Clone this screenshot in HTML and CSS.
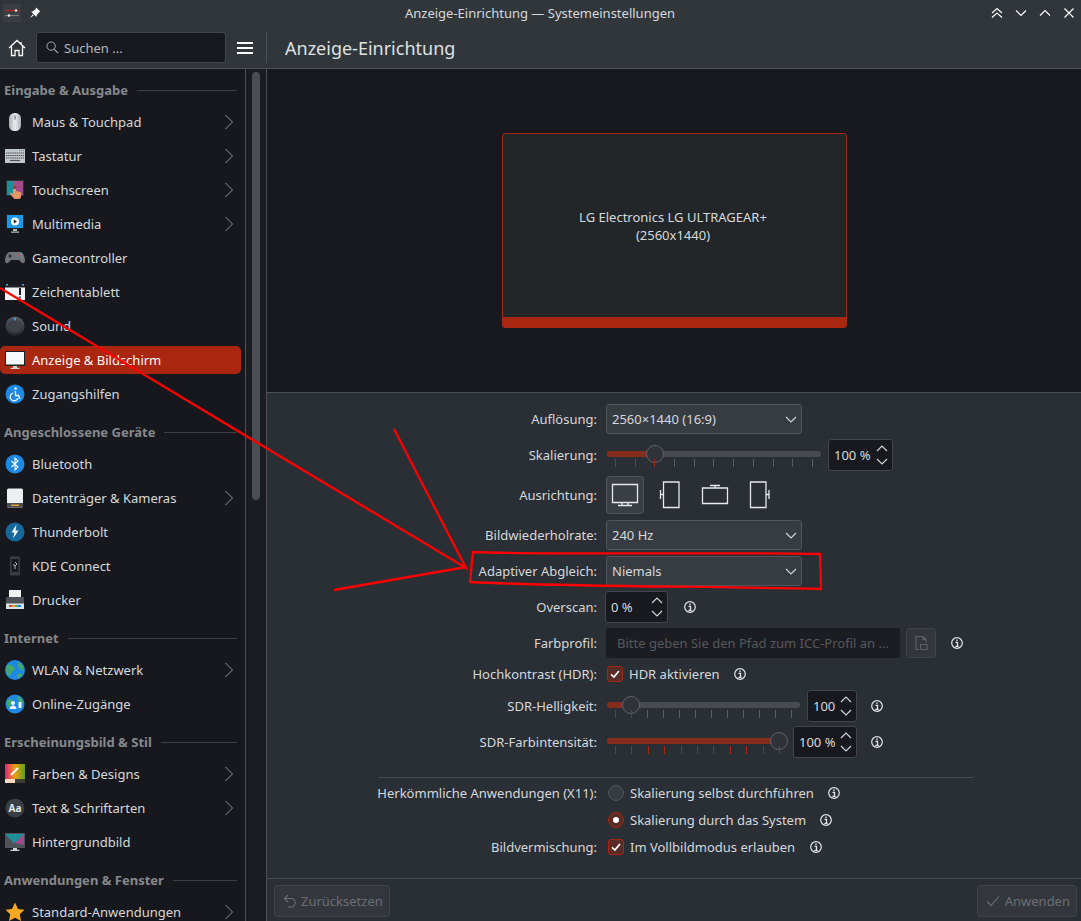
FILE: index.html
```html
<!DOCTYPE html>
<html lang="de">
<head>
    <meta charset="UTF-8">
    <title>Anzeige-Einrichtung — Systemeinstellungen</title>
    <link rel="stylesheet" href="styles.css">
</head>
<body>
    <svg class="defs" width="0" height="0">
        <symbol id="chev-right" viewBox="0 0 10 16"><path d="M1.5 1 L8.5 8 L1.5 15" fill="none" stroke="currentColor" stroke-width="1"/></symbol>
        <symbol id="chev-down" viewBox="0 0 12 7"><path d="M1 1 L6 6 L11 1" fill="none" stroke="currentColor" stroke-width="1.1"/></symbol>
        <symbol id="chev-up" viewBox="0 0 12 7"><path d="M1 6 L6 1 L11 6" fill="none" stroke="currentColor" stroke-width="1.1"/></symbol>
        <symbol id="info" viewBox="0 0 12 12"><circle cx="6" cy="6" r="5.3" fill="none" stroke="currentColor" stroke-width="1.2"/><path d="M6 2.5v1.6M4.5 5.3H6.5V9M4.4 9.3h3.2" fill="none" stroke="currentColor" stroke-width="1.3"/></symbol>
        <symbol id="tick" viewBox="0 0 16 16"><path d="M3.5 8.5 L6.8 11.5 L12.5 4.5" fill="none" stroke="currentColor" stroke-width="2"/></symbol>
    </svg>

    <div class="window">
        <div class="titlebar">
            <div class="title-left">
                <svg class="app-icon" width="18" height="18" viewBox="0 0 18 18"><rect width="18" height="18" rx="1" fill="#3a3d42"/><path d="M2 6.5h14" stroke="#c0291b" stroke-width="1.2"/><path d="M2 11.5h14" stroke="#777" stroke-width="1.2"/><circle cx="13" cy="6.5" r="1.3" fill="#eee"/><circle cx="6" cy="11.5" r="1.3" fill="#eee"/></svg>
                <svg width="12" height="12" viewBox="0 0 12 12"><path d="M7.2 0.6 L11.4 4.8 L9.8 5.4 L7.6 8.6 L7.4 10 L2 4.6 L3.4 4.4 L6.6 2.2Z M3.8 7.2 L0.8 11.2 L4.8 8.2Z" fill="#fcfcfc"/></svg>
            </div>
            <div class="title-text">Anzeige-Einrichtung — Systemeinstellungen</div>
            <div class="title-buttons">
                <svg width="12" height="12" viewBox="0 0 12 12"><path d="M1 6 L6 1.5 L11 6 M1 10.5 L6 6 L11 10.5" fill="none" stroke="#fcfcfc" stroke-width="1.2"/></svg>
                <svg width="12" height="12" viewBox="0 0 12 12"><path d="M1 3.5 L6 8.5 L11 3.5" fill="none" stroke="#fcfcfc" stroke-width="1.2"/></svg>
                <svg width="12" height="12" viewBox="0 0 12 12"><path d="M1 8.5 L6 3.5 L11 8.5" fill="none" stroke="#fcfcfc" stroke-width="1.2"/></svg>
                <svg width="12" height="12" viewBox="0 0 12 12"><path d="M1.5 1.5 L10.5 10.5 M10.5 1.5 L1.5 10.5" fill="none" stroke="#fcfcfc" stroke-width="1.2"/></svg>
            </div>
        </div>

        <div class="toolbar">
            <div class="toolbar-left">
                <svg class="home" width="18" height="18" viewBox="0 0 18 18"><path d="M1 9 L9 1.5 L17 9 M3.5 7.5 V16.5 H7 V11.5 H11 V16.5 H14.5 V7.5 M13 3 V5.5" fill="none" stroke="#fcfcfc" stroke-width="1.3"/></svg>
                <div class="search">
                    <svg width="13" height="13" viewBox="0 0 14 14"><circle cx="5.5" cy="5.5" r="4.5" fill="none" stroke="#b4b7ba" stroke-width="1"/><path d="M9 9 L13 13" stroke="#b4b7ba" stroke-width="1.1"/></svg>
                    <span>Suchen ...</span>
                </div>
                <svg class="burger" width="16" height="12" viewBox="0 0 16 12"><path d="M0 1h16M0 6h16M0 11h16" stroke="#fcfcfc" stroke-width="2"/></svg>
            </div>
            <div class="page-title">Anzeige-Einrichtung</div>
        </div>

        <div class="main">
            <div class="sidebar">
                <div class="group"><span>Eingabe &amp; Ausgabe</span><i></i></div>
                <div class="item">
                    <svg width="22" height="22" viewBox="0 0 22 22"><defs><linearGradient id="maus" x1="0" y1="0" x2="1" y2="0"><stop offset="0" stop-color="#a9adb3"/><stop offset=".5" stop-color="#eceef0"/><stop offset="1" stop-color="#a9adb3"/></linearGradient></defs><rect x="5" y="2" width="12" height="18" rx="5.500" fill="url(#maus)"/><rect x="10.300" y="4.500" width="1.400" height="4" fill="#7d8187"/></svg>
                    <span>Maus &amp; Touchpad</span><svg class="chev"><use href="#chev-right"/></svg>
                </div>
                <div class="item">
                    <svg width="22" height="22" viewBox="0 0 22 22"><rect x="1" y="4" width="20" height="14" fill="#c3c8ca"/><path d="M2 8h18M2 10.500h18M2 13h18" stroke="#4d5156" stroke-width="1.200" stroke-dasharray="1.500 .6"/><path d="M6 15.500h10" stroke="#4d5156" stroke-width="1.200"/><path d="M15 5.500h5" stroke="#2ea58a" stroke-width="1" stroke-dasharray="1 1"/></svg>
                    <span>Tastatur</span><svg class="chev"><use href="#chev-right"/></svg>
                </div>
                <div class="item">
                    <svg width="22" height="22" viewBox="0 0 22 22"><rect x="2" y="1" width="18" height="16" fill="#2b2f36"/><path d="M3 2h7v14H3z" fill="#1c8f9a"/><path d="M10 2h9v14H10z" fill="#a34a8a"/><path d="M9 7a1.500 1.500 0 0 1 3 0v5l4 1c1 .4 1.500 1 1.400 2l-.5 3c-.2 1-.9 2-2 2h-3.500c-1 0-1.800-.6-2.400-1.500L6 15c-.5-1 .8-1.800 1.600-1L9 15z" fill="#e59866"/><path d="M9 7a1.500 1.500 0 0 1 3 0v3H9z" fill="#b0392b"/></svg>
                    <span>Touchscreen</span><svg class="chev"><use href="#chev-right"/></svg>
                </div>
                <div class="item">
                    <svg width="22" height="22" viewBox="0 0 22 22"><rect x="2" y="1" width="18" height="15" fill="#1d2126"/><rect x="3" y="2" width="16" height="13" fill="#1a97e8"/><circle cx="11" cy="8.500" r="4" fill="#fcfcfc"/><path d="M9.800 6.500v4l3.200-2z" fill="#1d2126"/><path d="M9 16h4v2H9zM7 18.500h8v1.200H7z" fill="#b4b7ba"/></svg>
                    <span>Multimedia</span><svg class="chev"><use href="#chev-right"/></svg>
                </div>
                <div class="item">
                    <svg width="22" height="22" viewBox="0 0 22 22"><path d="M6 5h10c3 0 4.500 4 5 8 .3 3-2 4-3.500 2.500L15 13H7l-2.500 2.500C3 17 .7 16 1 13c.5-4 2-8 5-8z" fill="#71757b"/><path d="M4 9h4M6 7v4" stroke="#23262b" stroke-width="1.200"/><circle cx="15" cy="8" r="1" fill="#d0504a"/><circle cx="17.500" cy="10" r="1" fill="#5fa05f"/><circle cx="17.500" cy="7" r="1" fill="#3daee9"/></svg>
                    <span>Gamecontroller</span>
                </div>
                <div class="item">
                    <svg width="22" height="22" viewBox="0 0 22 22"><rect x="1" y="4" width="20" height="15" fill="#f2f3f4"/><rect x="1" y="3.500" width="20" height="3" fill="#1d2126"/><rect x="2" y="3" width="2" height="1.500" fill="#3daee9"/><rect x="18" y="3" width="2" height="1.500" fill="#3daee9"/><path d="M16 7v7" stroke="#1d2126" stroke-width="2"/><path d="M16 15.500v2" stroke="#1d2126" stroke-width="1.500"/></svg>
                    <span>Zeichentablett</span>
                </div>
                <div class="item">
                    <svg width="22" height="22" viewBox="0 0 22 22"><defs><linearGradient id="knopf" x1="0" y1="0" x2="0" y2="1"><stop offset="0" stop-color="#565b63"/><stop offset="1" stop-color="#262a30"/></linearGradient></defs><circle cx="11" cy="11" r="9.500" fill="url(#knopf)"/><circle cx="11" cy="11" r="6.500" fill="#3d4249"/><path d="M11 2.500v3" stroke="#3daee9" stroke-width="1.500"/></svg>
                    <span>Sound</span>
                </div>
                <div class="item selected">
                    <svg width="22" height="22" viewBox="0 0 22 22"><rect x="1" y="2" width="20" height="15" fill="#1d2126"/><rect x="2" y="3" width="18" height="12.500" fill="#f8f9fa"/><path d="M9 17h4v1.800H9zM6.500 18.800h9V20h-9z" fill="#d0d3d6"/></svg>
                    <span>Anzeige &amp; Bildschirm</span>
                </div>
                <div class="item">
                    <svg width="22" height="22" viewBox="0 0 22 22"><circle cx="11" cy="11" r="9.500" fill="#1e88e5"/><circle cx="11.500" cy="5.500" r="1.300" fill="#fcfcfc"/><path d="M11.500 8v4.500h3l1.500 3.500M9 10a4 4 0 1 0 5 5" fill="none" stroke="#fcfcfc" stroke-width="1.300"/></svg>
                    <span>Zugangshilfen</span>
                </div>

                <div class="group"><span>Angeschlossene Geräte</span><i></i></div>
                <div class="item">
                    <svg width="22" height="22" viewBox="0 0 22 22"><circle cx="11" cy="11" r="9.500" fill="#1e88e5"/><path d="M7.500 8 L14 14 L11 17 V5 L14 8 L7.500 14" fill="none" stroke="#fcfcfc" stroke-width="1.100"/></svg>
                    <span>Bluetooth</span>
                </div>
                <div class="item">
                    <svg width="22" height="22" viewBox="0 0 22 22"><rect x="3" y="1.500" width="16" height="19" rx="1.500" fill="#eceef0"/><rect x="3" y="16" width="16" height="4.500" fill="#4a4e54"/><rect x="7" y="17.500" width="8" height="1.500" fill="#e0a030"/></svg>
                    <span>Datenträger &amp; Kameras</span><svg class="chev"><use href="#chev-right"/></svg>
                </div>
                <div class="item">
                    <svg width="22" height="22" viewBox="0 0 22 22"><circle cx="11" cy="11" r="9.500" fill="#16689c"/><path d="M12.500 3.500 L7.500 11.500 H10.500 L9 17.500 L14.500 9.500 H11.500Z" fill="#fcfcfc"/></svg>
                    <span>Thunderbolt</span>
                </div>
                <div class="item">
                    <svg width="22" height="22" viewBox="0 0 22 22"><rect x="6" y="1.500" width="10" height="19" rx="1" fill="#3a3d42"/><rect x="7.500" y="4" width="7" height="13" fill="#17181d"/><path d="M11 7l2 2-2 2v3M10 9v2" fill="none" stroke="#b4b7ba" stroke-width="1"/></svg>
                    <span>KDE Connect</span>
                </div>
                <div class="item">
                    <svg width="22" height="22" viewBox="0 0 22 22"><rect x="5" y="1" width="12" height="8" fill="#f2f3f4"/><rect x="2" y="8" width="18" height="10" rx="1" fill="#4f5359"/><rect x="2" y="14.500" width="18" height="5.500" fill="#dfe1e3"/><path d="M5 17h3" stroke="#d0504a" stroke-width="2"/><path d="M8 17h3" stroke="#e0a030" stroke-width="2"/><path d="M11 17h3" stroke="#4caf50" stroke-width="2"/><path d="M14 17h3" stroke="#1e88e5" stroke-width="2"/></svg>
                    <span>Drucker</span>
                </div>

                <div class="group"><span>Internet</span><i></i></div>
                <div class="item">
                    <svg width="22" height="22" viewBox="0 0 22 22"><circle cx="11" cy="11" r="10" fill="#1e88e5"/><path d="M3 6c3-1 5 0 7 2s0 4-2 5-1 5-3 4S1 10 3 6zM14 3c3 1 6 5 6 8-2 1-4 0-5-2s-2-4-1-6zM14 15c2-1 4 0 4 1-1 2-3 3-5 3 0-2 0-3 1-4z" fill="#43a96a"/></svg>
                    <span>WLAN &amp; Netzwerk</span><svg class="chev"><use href="#chev-right"/></svg>
                </div>
                <div class="item">
                    <svg width="22" height="22" viewBox="0 0 22 22"><circle cx="11" cy="11" r="9.500" fill="#1e88e5"/><path d="M3 7c3-2 6 0 6 2s-3 3-4 5S2 10 3 7zM14 3c3 1 5 4 5 7-2 0-4-1-5-3s-1-3 0-4z" fill="#43a96a"/><circle cx="9" cy="10" r="2" fill="#eaf4fc"/><path d="M5.500 16c0-2 1.500-3.500 3.500-3.500s3.500 1.500 3.500 3.500z" fill="#eaf4fc"/><path d="M14.500 9h3v6h-3z" fill="#eaf4fc"/></svg>
                    <span>Online-Zugänge</span>
                </div>

                <div class="group"><span>Erscheinungsbild &amp; Stil</span><i></i></div>
                <div class="item">
                    <svg width="22" height="22" viewBox="0 0 22 22"><defs><linearGradient id="farben" x1="0" y1="0" x2="1" y2="0"><stop offset="0" stop-color="#e81e80"/><stop offset=".5" stop-color="#e8a010"/><stop offset="1" stop-color="#5fa020"/></linearGradient></defs><rect x="1" y="1" width="20" height="15" fill="url(#farben)"/><rect x="1" y="16" width="10" height="4" fill="#fbdcc0"/><rect x="11" y="16" width="10" height="4" fill="#3a3d32"/><path d="M7 12 L14 5" stroke="#fcfcfc" stroke-width="2"/></svg>
                    <span>Farben &amp; Designs</span><svg class="chev"><use href="#chev-right"/></svg>
                </div>
                <div class="item">
                    <svg width="22" height="22" viewBox="0 0 22 22"><circle cx="11" cy="11" r="9.500" fill="#3a3d42"/><text x="11" y="14.500" class="aa">Aa</text></svg>
                    <span>Text &amp; Schriftarten</span><svg class="chev"><use href="#chev-right"/></svg>
                </div>
                <div class="item">
                    <svg width="22" height="22" viewBox="0 0 22 22"><rect x="1" y="2" width="20" height="15" fill="#4f5359"/><path d="M2 3h18v5L10 12 2 4z" fill="#1c8f9a"/><path d="M20 3v11l-9-2z" fill="#a34a8a"/><path d="M9 17h4v1.800H9zM6.500 18.800h9V20h-9z" fill="#d0d3d6"/></svg>
                    <span>Hintergrundbild</span>
                </div>

                <div class="group"><span>Anwendungen &amp; Fenster</span><i></i></div>
                <div class="item">
                    <svg width="22" height="22" viewBox="0 0 22 22"><path d="M11 1.500 L14 8 L20.500 8.800 L15.800 13.300 L17 20 L11 16.700 L5 20 L6.200 13.300 L1.500 8.800 L8 8Z" fill="#f6a723"/></svg>
                    <span>Standard-Anwendungen</span><svg class="chev"><use href="#chev-right"/></svg>
                </div>
            </div>

            <div class="scroll-col"><div class="scroll-thumb"></div></div>

            <div class="content">
                <div class="preview">
                    <div class="monitor">
                        <div class="monitor-name">LG Electronics LG ULTRAGEAR+<br>(2560x1440)</div>
                        <div class="monitor-bar"></div>
                    </div>
                </div>

                <div class="form">
                    <div class="row">
                        <label>Auflösung:</label>
                        <div class="combo"><span>2560×1440 (16:9)</span><svg class="arrow"><use href="#chev-down"/></svg></div>
                    </div>
                    <div class="row">
                        <label>Skalierung:</label>
                        <div class="slider w-214">
                            <div class="track"><div class="fill" style="width: 48px"></div></div>
                            <div class="handle" style="left: 39px"></div>
                            <div class="ticks"><b class="on"></b><b class="on"></b><b class="on"></b><b></b><b></b><b></b><b></b><b></b><b></b><b></b><b></b></div>
                        </div>
                        <div class="spin w-65 ml-7"><span>100 %</span><div class="spin-arrows"><svg><use href="#chev-up"/></svg><svg><use href="#chev-down"/></svg></div></div>
                    </div>
                    <div class="row row-tall">
                        <label>Ausrichtung:</label>
                        <div class="orient">
                            <div class="orient-btn active"><svg width="28" height="24" viewBox="0 0 28 24"><path d="M1.500 1.500h25v18h-25z M11 19.500v2.500 M17 19.500v2.500 M7 22.500h14" fill="none" stroke="#e6e8ea" stroke-width="1.300"/></svg></div>
                            <div class="orient-btn"><svg width="24" height="28" viewBox="0 0 24 28"><path d="M5.500 1h15.500v25.500H5.500z M2.500 13.500h3 M2.500 9v9" fill="none" stroke="#e6e8ea" stroke-width="1.300"/></svg></div>
                            <div class="orient-btn"><svg width="28" height="24" viewBox="0 0 28 24"><path d="M1.500 5h25v15.500h-25z M14 2.500v2.500 M9 2.500h10" fill="none" stroke="#e6e8ea" stroke-width="1.300"/></svg></div>
                            <div class="orient-btn"><svg width="24" height="28" viewBox="0 0 24 28"><path d="M2.500 1h15.500v25.500H2.500z M18 13.500h3 M21 9v9" fill="none" stroke="#e6e8ea" stroke-width="1.300"/></svg></div>
                        </div>
                    </div>
                    <div class="row">
                        <label>Bildwiederholrate:</label>
                        <div class="combo"><span>240 Hz</span><svg class="arrow"><use href="#chev-down"/></svg></div>
                    </div>
                    <div class="row">
                        <label>Adaptiver Abgleich:</label>
                        <div class="combo"><span>Niemals</span><svg class="arrow"><use href="#chev-down"/></svg></div>
                    </div>
                    <div class="row">
                        <label>Overscan:</label>
                        <div class="spin w-63 ml-n1"><span>0 %</span><div class="spin-arrows"><svg><use href="#chev-up"/></svg><svg><use href="#chev-down"/></svg></div></div>
                        <svg class="info ml-16"><use href="#info"/></svg>
                    </div>
                    <div class="row">
                        <label>Farbprofil:</label>
                        <div class="path-input">Bitte geben Sie den Pfad zum ICC-Profil an ...</div>
                        <div class="path-btn"><svg width="14" height="16" viewBox="0 0 14 16"><path d="M9 1.500H2v13h3 M9 1.500l3 3v3 M9 1.500v3h3 M6.500 9.500h6.500v5H6.500z" fill="none" stroke="#5b5f65" stroke-width="1.200"/></svg></div>
                        <svg class="info ml-15"><use href="#info"/></svg>
                    </div>
                    <div class="row row-check row-hdr">
                        <label>Hochkontrast (HDR):</label>
                        <div class="check"><svg><use href="#tick"/></svg></div>
                        <span class="opt">HDR aktivieren</span>
                        <svg class="info ml-14"><use href="#info"/></svg>
                    </div>
                    <div class="row">
                        <label>SDR-Helligkeit:</label>
                        <div class="slider w-193">
                            <div class="track"><div class="fill" style="width: 24px"></div></div>
                            <div class="handle" style="left: 15px"></div>
                            <div class="ticks"><b class="on"></b><b class="on"></b><b></b><b></b><b></b><b></b><b></b><b></b><b></b><b></b><b></b><b></b></div>
                        </div>
                        <div class="spin w-50 ml-7"><span>100</span><div class="spin-arrows"><svg><use href="#chev-up"/></svg><svg><use href="#chev-down"/></svg></div></div>
                        <svg class="info ml-14"><use href="#info"/></svg>
                    </div>
                    <div class="row">
                        <label>SDR-Farbintensität:</label>
                        <div class="slider w-181">
                            <div class="track"><div class="fill" style="width: 172px"></div></div>
                            <div class="handle" style="left: 163px"></div>
                            <div class="ticks"><b class="on"></b><b class="on"></b><b class="on"></b><b class="on"></b><b class="on"></b><b class="on"></b><b class="on"></b><b class="on"></b><b class="on"></b><b class="on"></b><b class="on"></b></div>
                        </div>
                        <div class="spin w-64 ml-5"><span>100 %</span><div class="spin-arrows"><svg><use href="#chev-up"/></svg><svg><use href="#chev-down"/></svg></div></div>
                        <svg class="info ml-14"><use href="#info"/></svg>
                    </div>

                    <div class="separator"></div>

                    <div class="row row-check row-low">
                        <label>Herkömmliche Anwendungen (X11):</label>
                        <div class="radio"></div>
                        <span class="opt">Skalierung selbst durchführen</span>
                        <svg class="info ml-14"><use href="#info"/></svg>
                    </div>
                    <div class="row row-check row-low">
                        <label></label>
                        <div class="radio checked"></div>
                        <span class="opt">Skalierung durch das System</span>
                        <svg class="info ml-14"><use href="#info"/></svg>
                    </div>
                    <div class="row row-check row-low">
                        <label>Bildvermischung:</label>
                        <div class="check"><svg><use href="#tick"/></svg></div>
                        <span class="opt">Im Vollbildmodus erlauben</span>
                        <svg class="info ml-15"><use href="#info"/></svg>
                    </div>
                </div>

                <div class="footer">
                    <div class="btn">
                        <svg width="16" height="16" viewBox="0 0 16 16"><path d="M7 2 L3.500 5.500 L7 9 M3.500 5.500H10a4 4 0 0 1 0 8.500H7" fill="none" stroke="#6b6f74" stroke-width="1.100"/></svg>
                        <span>Zurücksetzen</span>
                    </div>
                    <div class="btn btn-apply">
                        <svg width="16" height="16" viewBox="0 0 16 16"><path d="M2 8.500 L6 12.500 L14 3.500" fill="none" stroke="#6b6f74" stroke-width="1.100"/></svg>
                        <span>Anwenden</span>
                    </div>
                </div>
            </div>
        </div>

        <!-- hand drawn marks on top of the screenshot -->
        <svg class="marks" width="1081" height="921" viewBox="0 0 1081 921">
            <path d="M0 288 L466 568 L394 429 M466 567 L334 590" fill="none" stroke="#f00" stroke-width="2.300"/>
            <path d="M473 552 C560 555 700 552 820 554 L821 589 C700 586 570 587 470 582 Z" fill="none" stroke="#f00" stroke-width="2.300"/>
        </svg>
    </div>
</body>
</html>
```

FILE: styles.css
```css
* {
    box-sizing: border-box;
}
body {
    margin: 0;
    background-color: #2a2e35;
    font-family: "Noto Sans", sans-serif;
    font-size: 13px;
    color: #d6d9dc;
}
.defs {
    position: absolute;
}
.window {
    position: relative;
    width: 1081px;
    height: 921px;
    display: flex;
    flex-direction: column;
    overflow: hidden;
}

/* title bar */
.titlebar {
    height: 30px;
    flex: none;
    display: flex;
    align-items: center;
    justify-content: space-between;
    background-color: #31363b;
    padding: 0 6px 4px 3px;
    position: relative;
}
.title-left {
    display: flex;
    align-items: center;
    gap: 8px;
}
.title-text {
    flex: 1;
    text-align: center;
    color: #d6d9dc;
    padding-left: 48px;
}
.title-buttons {
    display: flex;
    gap: 12px;
}

/* toolbar */
.toolbar {
    height: 39px;
    flex: none;
    display: flex;
    align-items: flex-start;
    background-color: #31363b;
    border-bottom: 1px solid #4c5157;
}
.toolbar-left {
    width: 267px;
    height: 31px;
    margin-top: 2px;
    display: flex;
    align-items: center;
    padding-left: 8px;
    border-right: 1px solid #4c5157;
    flex: none;
}
.search {
    width: 190px;
    height: 31px;
    margin-left: 10px;
    display: flex;
    align-items: center;
    gap: 5px;
    padding-left: 9px;
    background-color: #18191e;
    border: 1px solid #42464c;
    border-radius: 3px;
    color: #b4b7ba;
}
.burger {
    margin-left: 11px;
}
.page-title {
    margin-left: 18px;
    font-size: 18px;
    line-height: 36px;
    color: #dfe1e3;
}

/* sidebar */
.main {
    flex: 1;
    display: flex;
    min-height: 0;
}
.sidebar {
    width: 246px;
    flex: none;
    background-color: #17181d;
    border-right: 1px solid #4c5157;
    overflow: hidden;
    padding-top: 6px;
}
.group {
    height: 30px;
    display: flex;
    align-items: center;
    padding: 0 8px 0 4px;
    gap: 9px;
    font-weight: 700;
    color: #85888c;
    margin-top: 6px;
}
.group:first-child {
    margin-top: 0;
}
.group i {
    flex: 1;
    height: 1px;
    background-color: #3b3e43;
}
.item {
    position: relative;
    height: 34px;
    display: flex;
    align-items: center;
    gap: 6px;
    padding-left: 4px;
    width: 241px;
}
.item svg {
    flex: none;
}
.item .chev {
    position: absolute;
    left: 224px;
    top: 9px;
    width: 10px;
    height: 16px;
    color: #8d9094;
}
.item.selected {
    color: #fcfcfc;
}
.item.selected::before {
    content: "";
    position: absolute;
    left: 0;
    right: 0;
    top: 3px;
    bottom: 3px;
    background-color: #a92610;
    border-radius: 5px;
}
.item.selected svg,
.item.selected span {
    position: relative;
}
.aa {
    font-size: 10px;
    font-weight: 700;
    fill: #e6e8ea;
    text-anchor: middle;
}
.scroll-col {
    width: 21px;
    flex: none;
    background-color: #1b1c21;
    border-right: 1px solid #4c5157;
    padding: 3px 5px 0 6px;
}
.scroll-thumb {
    width: 8px;
    height: 428px;
    border-radius: 4px;
    background-color: #4a4d52;
}

/* right side */
.content {
    flex: 1;
    display: flex;
    flex-direction: column;
    min-width: 0;
}
.preview {
    height: 324px;
    flex: none;
    display: flex;
    align-items: center;
    justify-content: center;
    background-color: #18191e;
    border-bottom: 1px solid #4c5157;
}
.monitor {
    width: 345px;
    height: 195px;
    display: flex;
    flex-direction: column;
    background-color: #232629;
    border: 1px solid #a92610;
    border-radius: 3px;
    overflow: hidden;
}
.monitor-name {
    flex: 1;
    display: flex;
    align-items: center;
    justify-content: center;
    text-align: center;
    padding-right: 2px;
    line-height: 18px;
    color: #d6d9dc;
}
.monitor-bar {
    height: 10px;
    background-color: #a92610;
}

/* form */
.form {
    flex: 1;
    display: flex;
    flex-direction: column;
    gap: 6px;
    padding-top: 11px;
    background-color: #2a2e35;
}
.row {
    height: 30px;
    display: flex;
    align-items: center;
    padding-left: 5px;
}
.row-tall {
    height: 38px;
}
.row-check {
    height: 21px;
}
.row-hdr {
    margin: -1px 0 1px;
}
.row-low .check,
.row-low .radio {
    margin-left: 2px;
}
.row label {
    width: 325px;
    flex: none;
    text-align: right;
    margin-right: 9px;
    white-space: nowrap;
}
.combo {
    width: 196px;
    height: 30px;
    display: flex;
    align-items: center;
    justify-content: space-between;
    padding: 0 4px 0 5px;
    background-color: #373c43;
    border: 1px solid #51565c;
    border-radius: 3px;
}
.arrow {
    width: 12px;
    height: 7px;
    color: #d6d9dc;
}
.slider {
    position: relative;
    height: 30px;
    flex: none;
    margin-left: 1px;
}
.w-214 { width: 214px; }
.w-193 { width: 193px; }
.w-181 { width: 181px; }
.track {
    position: absolute;
    left: 0;
    right: 0;
    top: 11px;
    height: 6px;
    border-radius: 3px;
    background-color: #484c52;
    overflow: hidden;
}
.fill {
    height: 6px;
    background-color: #862c1d;
}
.handle {
    position: absolute;
    top: 5px;
    width: 18px;
    height: 18px;
    border-radius: 50%;
    background-color: #2f3339;
    border: 1px solid #5f6369;
}
.ticks {
    position: absolute;
    left: 0;
    right: 0;
    top: 19px;
    height: 9px;
    padding: 0 8px;
    display: flex;
    justify-content: space-between;
}
.ticks b {
    width: 1px;
    height: 8px;
    background-color: #5a5e64;
}
.ticks b.on {
    background-color: #a92610;
}
.spin {
    height: 32px;
    flex: none;
    display: flex;
    align-items: center;
    justify-content: space-between;
    padding: 0 4px 0 5px;
    background-color: #18191e;
    border: 1px solid #42464c;
    border-radius: 3px;
}
.w-65 { width: 65px; }
.w-64 { width: 64px; }
.w-63 { width: 63px; }
.w-50 { width: 50px; }
.spin-arrows {
    display: flex;
    flex-direction: column;
    gap: 6px;
}
.spin-arrows svg {
    display: block;
    width: 12px;
    height: 7px;
    color: #d6d9dc;
}
.ml-5 { margin-left: 5px; }
.ml-7 { margin-left: 7px; }
.ml-n1 { margin-left: -1px; }
.ml-14 { margin-left: 14px; }
.ml-15 { margin-left: 15px; }
.ml-16 { margin-left: 16px; }
.info {
    width: 12px;
    height: 12px;
    flex: none;
    color: #e6e8ea;
}
.orient {
    display: flex;
    gap: 7px;
}
.orient-btn {
    width: 38px;
    height: 38px;
    display: flex;
    align-items: center;
    justify-content: center;
    border: 1px solid transparent;
    border-radius: 3px;
}
.orient-btn.active {
    background-color: #3a3f46;
    border-color: #51565c;
}
.path-input {
    width: 294px;
    height: 30px;
    flex: none;
    padding-left: 11px;
    line-height: 30px;
    background-color: #1c1d22;
    border-radius: 3px;
    color: #55585d;
    white-space: nowrap;
    overflow: hidden;
}
.path-btn {
    width: 30px;
    height: 30px;
    flex: none;
    margin-left: 6px;
    display: flex;
    align-items: center;
    justify-content: center;
    background-color: #33373d;
    border: 1px solid #3f4349;
    border-radius: 3px;
}
.check {
    width: 16px;
    height: 16px;
    flex: none;
    margin-left: 1px;
    background-color: #5a2c28;
    border: 1px solid #a92610;
    border-radius: 3px;
    color: #fcfcfc;
}
.check svg {
    display: block;
    width: 14px;
    height: 14px;
}
.radio {
    width: 16px;
    height: 16px;
    flex: none;
    border-radius: 50%;
    background-color: #373c43;
    border: 1px solid #51565c;
}
.radio.checked {
    background-color: #5a2c28;
    border-color: #a92610;
    display: flex;
    align-items: center;
    justify-content: center;
}
.radio.checked::after {
    content: "";
    width: 6px;
    height: 6px;
    border-radius: 50%;
    background-color: #fcfcfc;
}
.opt {
    margin-left: 6px;
    white-space: nowrap;
}
.separator {
    width: 595px;
    height: 1px;
    margin: 14px 0 -2px 111px;
    background-color: #484c52;
}

/* footer */
.footer {
    height: 43px;
    flex: none;
    display: flex;
    align-items: center;
    justify-content: space-between;
    padding: 2px 4px 0 7px;
    border-top: 1px solid #4c5157;
    background-color: #2a2e35;
}
.btn {
    height: 32px;
    display: flex;
    align-items: center;
    gap: 4px;
    padding: 0 6px;
    background-color: #33373d;
    border: 1px solid #3f4349;
    border-radius: 3px;
    color: #6b6f74;
}
.btn-apply {
    padding-left: 7px;
}

.marks {
    position: absolute;
    left: 0;
    top: 0;
    pointer-events: none;
}
```
